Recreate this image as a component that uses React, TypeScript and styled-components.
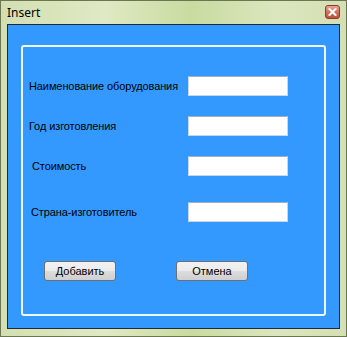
import React from 'react';
import styled, { createGlobalStyle } from 'styled-components';

const GlobalStyle = createGlobalStyle`
  html, body {
    margin: 0;
    padding: 0;
    background: #ffffff;
  }
  * {
    box-sizing: border-box;
  }
`;

const Window = styled.div`
  width: 347px;
  height: 337px;
  display: flex;
  flex-direction: column;
  border: 1px solid #6b7750;
  background: linear-gradient(90deg, #d3dfb2 0%, #dfe9c4 30%, #c9dba0 55%, #dbe6bf 80%, #d4dfb4 100%);
  font-family: "Liberation Sans", Arial, sans-serif;
`;

const TitleBar = styled.div`
  height: 23px;
  display: flex;
  align-items: center;
  justify-content: space-between;
  padding: 0 6px 0 6px;
`;

const Title = styled.span`
  font-family: "Noto Sans", "Liberation Sans", sans-serif;
  font-size: 12px;
  color: #000;
  margin-top: -1px;
`;

const CloseButton = styled.div`
  width: 15px;
  height: 14px;
  margin-top: -2px;
  border: 1px solid #8a3c30;
  border-radius: 3px;
  background: linear-gradient(180deg, #e9a593 0%, #d46f5c 50%, #c14f3b 100%);
  display: flex;
  align-items: center;
  justify-content: center;
`;

const Client = styled.div`
  flex: 1;
  margin: 0 6px 7px 6px;
  border: 1px solid #1f2a38;
  background: #3399ff;
  padding: 20px 13px 12px 13px;
  display: flex;
`;

const GroupBox = styled.div`
  flex: 1;
  border: 2px solid #eef6ff;
  border-radius: 3px;
  padding: 29px 0 0 6px;
  display: flex;
  flex-direction: column;
`;

const Row = styled.div<{ $gap: number; $indent: number }>`
  display: flex;
  align-items: center;
  height: 20px;
  margin-top: ${(p) => p.$gap}px;
  padding-left: ${(p) => p.$indent}px;
`;

const Label = styled.span<{ $indent: number }>`
  width: ${(p) => 159 - p.$indent}px;
  font-size: 11px;
  color: #000;
  white-space: nowrap;
  letter-spacing: -0.1px;
`;

const Input = styled.input`
  width: 100px;
  height: 20px;
  border: 1px solid #c9d6e4;
  border-top-color: #9fb0c2;
  background: #fff;
  outline: none;
  padding: 0 3px;
  font-size: 11px;
`;

const Buttons = styled.div`
  display: flex;
  margin-top: 39px;
  padding-left: 15px;
  gap: 60px;
`;

const Button = styled.button`
  width: 72px;
  height: 20px;
  padding: 0;
  border: 1px solid #707070;
  border-radius: 3px;
  background: linear-gradient(180deg, #f2f2f2 0%, #ebebeb 50%, #dddddd 51%, #cfcfcf 100%);
  font-family: "Liberation Sans", Arial, sans-serif;
  font-size: 11px;
  color: #000;
`;

const fields = [
  { label: 'Наименование оборудования', gap: 0, indent: 0 },
  { label: 'Год изготовления', gap: 20, indent: 0 },
  { label: 'Стоимость', gap: 20, indent: 3 },
  { label: 'Страна-изготовитель', gap: 26, indent: 2 },
];

export default function App() {
  return (
    <>
      <GlobalStyle />
      <Window>
        <TitleBar>
          <Title>Insert</Title>
          <CloseButton>
            <svg width="9" height="8" viewBox="0 0 9 8">
              <path d="M1.5 1 L7.5 7 M7.5 1 L1.5 7" stroke="#fff" strokeWidth="2" strokeLinecap="square" />
            </svg>
          </CloseButton>
        </TitleBar>
        <Client>
          <GroupBox>
            {fields.map((f) => (
              <Row key={f.label} $gap={f.gap} $indent={f.indent}>
                <Label $indent={f.indent}>{f.label}</Label>
                <Input type="text" />
              </Row>
            ))}
            <Buttons>
              <Button>Добавить</Button>
              <Button>Отмена</Button>
            </Buttons>
          </GroupBox>
        </Client>
      </Window>
    </>
  );
}
